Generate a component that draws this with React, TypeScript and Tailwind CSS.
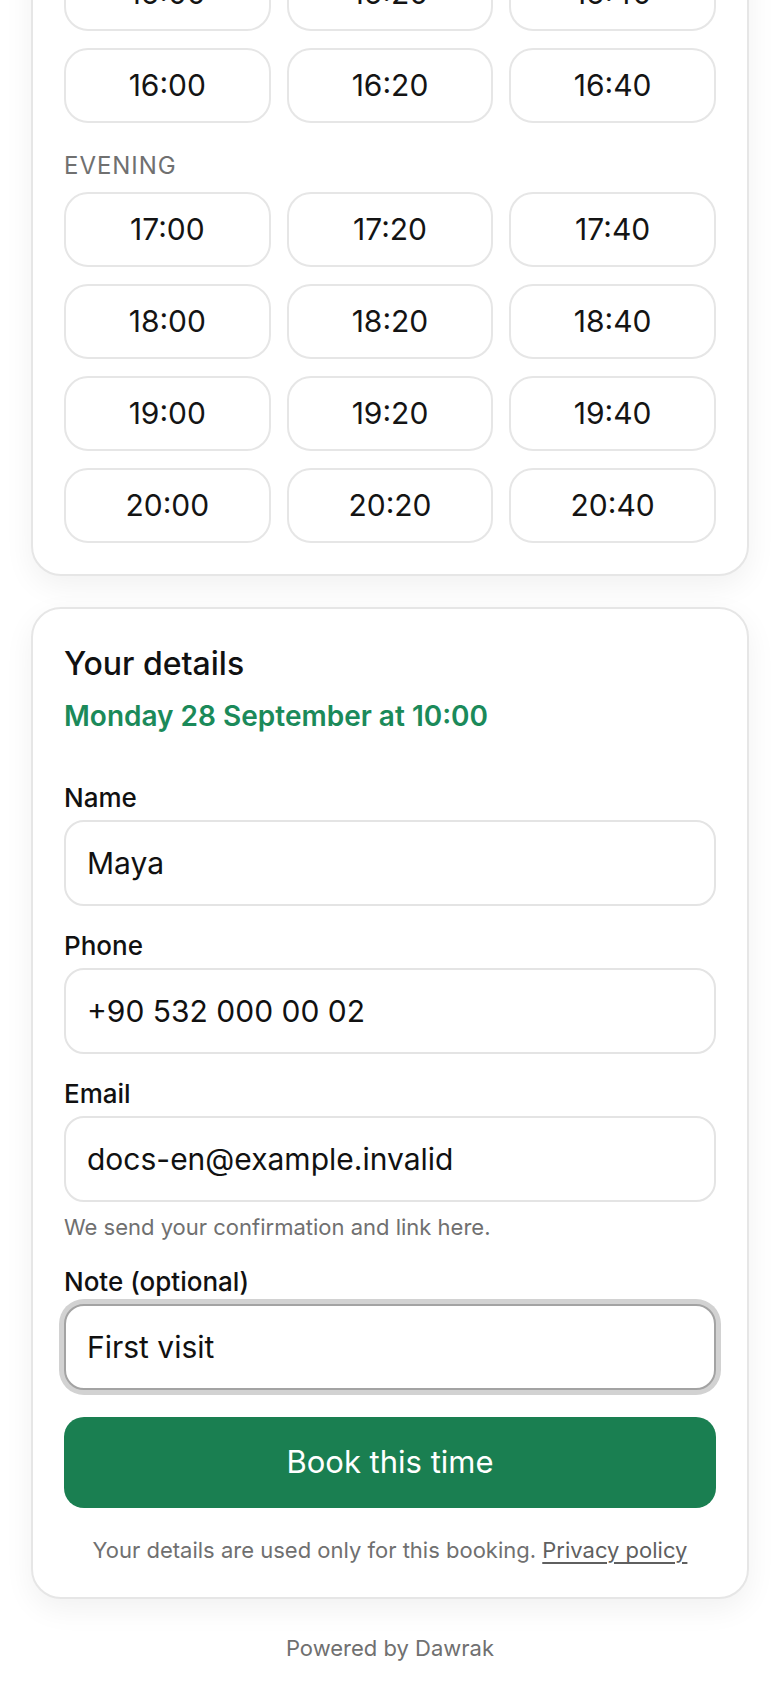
import React from 'react';

const font = { fontFamily: 'Inter, "Noto Sans", sans-serif' };

const morningTail = [['15:00', '15:20', '15:40'], ['16:00', '16:20', '16:40']];
const evening = [
  ['17:00', '17:20', '17:40'],
  ['18:00', '18:20', '18:40'],
  ['19:00', '19:20', '19:40'],
  ['20:00', '20:20', '20:40'],
];

function SlotGrid({ rows }: { rows: string[][] }) {
  return (
    <div className="grid grid-cols-3 gap-x-[16px] gap-y-[17px]">
      {rows.flat().map(t => (
        <button
          key={t}
          className="h-[75px] rounded-[24px] border-2 border-[#e6e6e6] bg-white text-[30px] text-[#141414]"
        >
          {t}
        </button>
      ))}
    </div>
  );
}

function Field({
  label,
  value,
  focused,
  hint,
}: {
  label: string;
  value: string;
  focused?: boolean;
  hint?: string;
}) {
  return (
    <div className="mt-[22px] first:mt-0">
      <label className="block text-[26px] leading-[36px] font-medium text-[#111] mb-[4px]">{label}</label>
      <input
        defaultValue={value}
        className={`block w-full h-[86px] rounded-[20px] border-2 bg-white pl-[21px] text-[30px] text-[#111] outline-none ${
          focused ? 'border-[#a3a3a3] ring-[5px] ring-[#d2d2d2]' : 'border-[#e4e4e4]'
        }`}
        style={font}
      />
      {hint && <p className="mt-[10px] text-[22px] leading-[30px] text-[#707070]">{hint}</p>}
    </div>
  );
}

export default function App() {
  return (
    <div className="h-[1688px] overflow-hidden bg-white px-[31px]" style={font}>
      {/* Slots card (scrolled, top cut off) */}
      <div className="-mt-[77px] rounded-[30px] border-2 border-[#e6e6e6] bg-white px-[31px] pt-[31px] pb-[31px] shadow-[0_10px_30px_rgba(0,0,0,0.06)]">
        <SlotGrid rows={morningTail} />
        <div className="mt-[27px] mb-[10px] text-[24px] leading-[32px] tracking-[0.04em] text-[#707070]">EVENING</div>
        <SlotGrid rows={evening} />
      </div>

      {/* Details card */}
      <div className="mt-[31px] rounded-[30px] border-2 border-[#e6e6e6] bg-white px-[31px] pt-[35px] pb-[32px] shadow-[0_10px_30px_rgba(0,0,0,0.06)]">
        <h2 className="text-[32px] leading-[40px] font-medium text-[#111]">Your details</h2>
        <p className="mt-[14px] text-[28px] leading-[36px] font-semibold text-[#1b8a5a]">Monday 28 September at 10:00</p>

        <div className="mt-[46px]">
          <Field label="Name" value="Maya" />
          <Field label="Phone" value="+90 532 000 00 02" />
          <Field label="Email" value="docs-en@example.invalid" hint="We send your confirmation and link here." />
          <Field label="Note (optional)" value="First visit" focused />
        </div>

        <button className="mt-[27px] h-[91px] w-full rounded-[20px] bg-[#1a7f51] text-[31px] text-white">
          Book this time
        </button>

        <p className="mt-[27px] text-center text-[22px] leading-[30px] text-[#707070]">
          Your details are used only for this booking.{' '}
          <a className="underline underline-offset-[4px] text-[#5f5f5f]">Privacy policy</a>
        </p>
      </div>

      <p className="mt-[34px] text-center text-[22px] leading-[30px] text-[#707070]">Powered by Dawrak</p>
    </div>
  );
}
